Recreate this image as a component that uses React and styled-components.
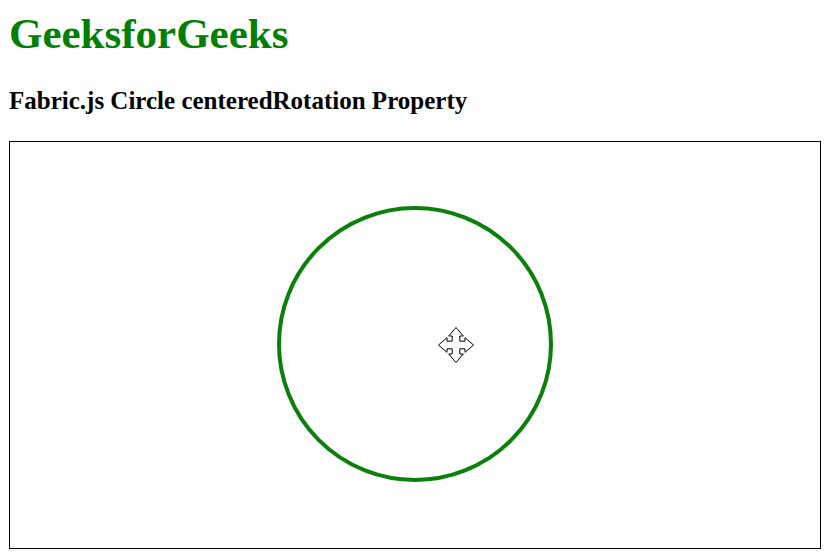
import React from "react"
import styled, { createGlobalStyle } from "styled-components"

const GlobalStyle = createGlobalStyle`
  html, body {
    margin: 0;
    padding: 0;
    background: #fff;
  }
  body {
    font-family: "Liberation Serif", "Times New Roman", serif;
    color: #000;
  }
`

const Page = styled.div`
  display: flex;
  flex-direction: column;
  padding: 9px 9px 0;
`

const Title = styled.h1`
  margin: 0;
  font-size: 43px;
  font-weight: bold;
  color: green;
`

const Subtitle = styled.h3`
  margin: 29px 0 0;
  font-size: 25px;
  font-weight: bold;
`

const Canvas = styled.div`
  margin-top: 26px;
  width: 810px;
  height: 406px;
  border: 1px solid #000;
  position: relative;

  svg {
    display: block;
  }
`

const MoveCursor = styled.svg`
  position: absolute;
  left: ${(p) => p.x - 19}px;
  top: ${(p) => p.y - 19}px;
`

// four-way move cursor, traced clockwise from the top tip
const cursorPoints = [
  [0, -17.5], [7.3, -9], [3.8, -9], [3.8, -3.8], [9, -3.8], [9, -7.3],
  [17.5, 0], [9, 7.3], [9, 3.8], [3.8, 3.8], [3.8, 9], [7.3, 9],
  [0, 17.5], [-7.3, 9], [-3.8, 9], [-3.8, 3.8], [-9, 3.8], [-9, 7.3],
  [-17.5, 0], [-9, -7.3], [-9, -3.8], [-3.8, -3.8], [-3.8, -9], [-7.3, -9],
]
  .map(([x, y]) => `${x + 19},${y + 19}`)
  .join(" ")

function App() {
  return (
    <>
      <GlobalStyle />
      <Page>
        <Title>GeeksforGeeks</Title>
        <Subtitle>Fabric.js Circle centeredRotation Property</Subtitle>
        <Canvas>
          <svg width="810" height="406">
            <circle cx="405" cy="202" r="136" fill="none" stroke="#0a800a" strokeWidth="4" />
          </svg>
          <MoveCursor x={445.5} y={202.5} width="38" height="38" viewBox="0 0 38 38">
            <polygon points={cursorPoints} fill="#fff" stroke="#000" strokeWidth="1" />
          </MoveCursor>
        </Canvas>
      </Page>
    </>
  )
}

export default App
